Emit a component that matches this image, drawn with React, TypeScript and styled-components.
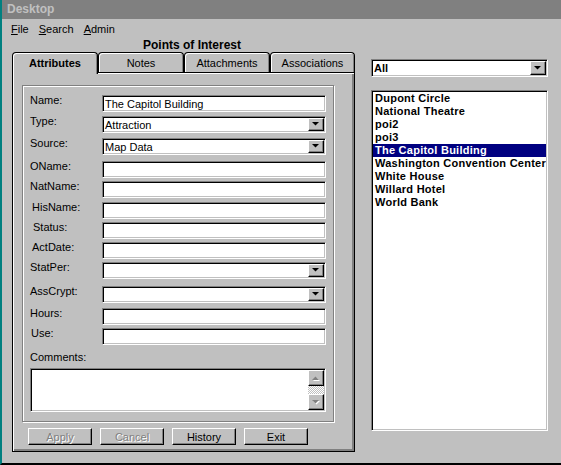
import React from "react";
import styled, { createGlobalStyle } from "styled-components";

const Global = createGlobalStyle`
  html, body { margin: 0; padding: 0; background: #c0c0c0; }
  body { font-family: "Liberation Sans", Arial, sans-serif; font-size: 11px; color: #000; }
  * { box-sizing: border-box; }
`;

const Window = styled.div`
  width: 561px;
  height: 465px;
  background: #c0c0c0;
  border-left: 2px solid #008080;
  border-bottom: 2px solid #000;
  display: flex;
  flex-direction: column;
  overflow: hidden;
`;

const TitleBar = styled.div`
  height: 19px;
  flex: none;
  background: #808080;
  color: #c0c0c0;
  font-weight: bold;
  font-size: 12px;
  line-height: 19px;
  padding-left: 5px;
`;

const MenuBar = styled.div`
  height: 20px;
  flex: none;
  display: flex;
  align-items: center;
  gap: 10px;
  padding-left: 9px;
  font-size: 11px;
`;

const MenuItem = styled.span`
  u { text-decoration: underline; text-underline-offset: 1px; }
`;

const Main = styled.div`
  flex: 1;
  display: flex;
`;

const LeftPane = styled.div`
  width: 358px;
  flex: none;
  display: flex;
  flex-direction: column;
`;

const Heading = styled.div`
  height: 13px;
  line-height: 13px;
  font-weight: bold;
  font-size: 12px;
  padding-left: 141px;
`;

const TabStrip = styled.div`
  display: flex;
  align-items: flex-end;
  height: 20px;
  margin-left: 10px;
  position: relative;
  z-index: 2;
`;

const Tab = styled.div<{ $active?: boolean; $w: number }>`
  width: ${(p) => p.$w}px;
  height: ${(p) => (p.$active ? 22 : 20)}px;
  margin-bottom: ${(p) => (p.$active ? -2 : 0)}px;
  padding-bottom: ${(p) => (p.$active ? 2 : 0)}px;
  background: #c0c0c0;
  border: 1px solid #000;
  border-bottom: none;
  border-radius: 4px 4px 0 0;
  box-shadow: inset 1px 1px 0 #fff, inset -1px 0 0 #808080;
  display: flex;
  align-items: center;
  justify-content: center;
  font-weight: ${(p) => (p.$active ? "bold" : "normal")};
  font-size: 11px;
`;

const Panel = styled.div`
  margin-left: 10px;
  width: 343px;
  height: 380px;
  border: 1px solid #000;
  box-shadow: inset 1px 1px 0 #fff, inset -1px -1px 0 #808080, inset -2px -2px 0 #808080;
  padding: 12px 0 0 9px;
  display: flex;
  flex-direction: column;
`;

const GroupBox = styled.div`
  width: 312px;
  height: 337px;
  border: 1px solid #808080;
  box-shadow: 1px 1px 0 #fff, inset 1px 1px 0 #fff;
  padding: 9px 7px 0 7px;
  display: flex;
  flex-direction: column;
`;

const FormRow = styled.div<{ $gap: number }>`
  display: grid;
  grid-template-columns: 72px 224px;
  margin-top: ${(p) => p.$gap}px;
`;

const Label = styled.span<{ $indent?: number }>`
  line-height: 13px;
  padding-left: ${(p) => p.$indent ?? 0}px;
  margin-top: -1px;
`;

const Field = styled.div<{ $bold?: boolean; $h?: number }>`
  display: flex;
  align-items: stretch;
  height: ${(p) => p.$h ?? 17}px;
  background: #fff;
  border: 1px solid;
  border-color: #808080 #fff #fff #808080;
  box-shadow: inset 1px 1px 0 #000, inset -1px -1px 0 #c0c0c0;
  padding: 1px 1px 1px 0;
  font-weight: ${(p) => (p.$bold ? "bold" : "normal")};
  overflow: hidden;
`;

const FieldText = styled.span`
  flex: 1;
  display: flex;
  align-items: center;
  padding-left: 2px;
  white-space: nowrap;
  overflow: hidden;
`;

const RaisedBox = styled.span`
  flex: none;
  width: 16px;
  display: flex;
  align-items: center;
  justify-content: center;
  background: #c0c0c0;
  border: 1px solid;
  border-color: #fff #000 #000 #fff;
  box-shadow: inset -1px -1px 0 #808080;
`;

const CommentsLabel = styled.div`
  margin-top: 6px;
  line-height: 13px;
  padding-left: 0px;
`;

const CommentsBox = styled.div`
  margin-top: 4px;
  width: 296px;
  height: 44px;
  background: #fff;
  border: 1px solid;
  border-color: #808080 #fff #fff #808080;
  box-shadow: inset 1px 1px 0 #000, inset -1px -1px 0 #c0c0c0;
  padding: 1px 1px 1px 0;
  display: flex;
  justify-content: flex-end;
`;

const ScrollBar = styled.div`
  width: 16px;
  display: flex;
  flex-direction: column;
`;

const ScrollButton = styled(RaisedBox)`
  height: 16px;
`;

const ScrollTrack = styled.div`
  flex: 1;
  background: repeating-conic-gradient(#c0c0c0 0 25%, #fff 0 50%) 0 0 / 2px 2px;
`;

const ButtonRow = styled.div`
  display: flex;
  gap: 8px;
  margin-top: 6px;
  padding-left: 6px;
`;

const Button = styled.button`
  width: 64px;
  height: 17px;
  padding: 0;
  font: 11px "Liberation Sans", Arial, sans-serif;
  background: #c0c0c0;
  color: #000;
  border: 1px solid;
  border-color: #fff #000 #000 #fff;
  box-shadow: inset -1px -1px 0 #808080;
  &:disabled {
    color: #808080;
    text-shadow: 1px 1px 0 #fff;
  }
`;

const RightPane = styled.div`
  flex: 1;
  display: flex;
  flex-direction: column;
  padding: 20px 0 0 11px;
`;

const SelectBox = styled(Field)`
  width: 177px;
`;

const ListBox = styled.div`
  margin-top: 13px;
  width: 177px;
  height: 341px;
  background: #fff;
  border: 1px solid;
  border-color: #808080 #fff #fff #808080;
  box-shadow: inset 1px 1px 0 #000, inset -1px -1px 0 #c0c0c0;
  padding: 1px 1px 1px 1px;
  display: flex;
  flex-direction: column;
  overflow: hidden;
`;

const ListItem = styled.div<{ $selected?: boolean }>`
  height: 13px;
  line-height: 13px;
  padding-left: 2px;
  font-weight: bold;
  font-size: 11px;
  letter-spacing: 0.25px;
  white-space: nowrap;
  overflow: hidden;
  background: ${(p) => (p.$selected ? "#000080" : "transparent")};
  color: ${(p) => (p.$selected ? "#fff" : "#000")};
`;

const Arrow = ({ up, disabled }: { up?: boolean; disabled?: boolean }) => (
  <svg width="8" height="5" viewBox="0 0 8 5" style={{ display: "block" }}>
    {disabled && (
      <polygon
        points={up ? "1,5 4.5,1.5 8,5" : "1,1 8,1 4.5,4.5"}
        fill="#fff"
      />
    )}
    <polygon
      points={up ? "0,4 3.5,0.5 7,4" : "0,0 7,0 3.5,3.5"}
      fill={disabled ? "#808080" : "#000"}
    />
  </svg>
);

type Row = {
  label: string;
  kind: "text" | "combo";
  value?: string;
  gap: number;
  indent?: number;
};

const rows: Row[] = [
  { label: "Name:", kind: "text", value: "The Capitol Building", gap: 0 },
  { label: "Type:", kind: "combo", value: "Attraction", gap: 4 },
  { label: "Source:", kind: "combo", value: "Map Data", gap: 5 },
  { label: "OName:", kind: "text", gap: 6, indent: -1 },
  { label: "NatName:", kind: "text", gap: 3 },
  { label: "HisName:", kind: "text", gap: 4, indent: 2 },
  { label: "Status:", kind: "text", gap: 3, indent: 3 },
  { label: "ActDate:", kind: "text", gap: 3, indent: 2 },
  { label: "StatPer:", kind: "combo", gap: 3, indent: -1 },
  { label: "AssCrypt:", kind: "combo", gap: 7, indent: -1 },
  { label: "Hours:", kind: "text", gap: 5 },
  { label: "Use:", kind: "text", gap: 3, indent: 1 },
];

const pois = [
  "Dupont Circle",
  "National Theatre",
  "poi2",
  "poi3",
  "The Capitol Building",
  "Washington Convention Center",
  "White House",
  "Willard Hotel",
  "World Bank",
];

const tabs = [
  { name: "Attributes", w: 86 },
  { name: "Notes", w: 86 },
  { name: "Attachments", w: 86 },
  { name: "Associations", w: 85 },
];

export default function App() {
  return (
    <>
      <Global />
      <Window>
        <TitleBar>Desktop</TitleBar>
        <MenuBar>
          <MenuItem>
            <u>F</u>ile
          </MenuItem>
          <MenuItem>
            <u>S</u>earch
          </MenuItem>
          <MenuItem>
            <u>A</u>dmin
          </MenuItem>
        </MenuBar>
        <Main>
          <LeftPane>
            <Heading>Points of Interest</Heading>
            <TabStrip>
              {tabs.map((t, i) => (
                <Tab key={t.name} $w={t.w} $active={i === 0}>
                  {t.name}
                </Tab>
              ))}
            </TabStrip>
            <Panel>
              <GroupBox>
                {rows.map((r) => (
                  <FormRow key={r.label} $gap={r.gap}>
                    <Label $indent={r.indent}>{r.label}</Label>
                    <Field>
                      <FieldText>{r.value ?? ""}</FieldText>
                      {r.kind === "combo" && (
                        <RaisedBox>
                          <Arrow />
                        </RaisedBox>
                      )}
                    </Field>
                  </FormRow>
                ))}
                <CommentsLabel>Comments:</CommentsLabel>
                <CommentsBox>
                  <ScrollBar>
                    <ScrollButton>
                      <Arrow up disabled />
                    </ScrollButton>
                    <ScrollTrack />
                    <ScrollButton>
                      <Arrow disabled />
                    </ScrollButton>
                  </ScrollBar>
                </CommentsBox>
              </GroupBox>
              <ButtonRow>
                <Button disabled>Apply</Button>
                <Button disabled>Cancel</Button>
                <Button>History</Button>
                <Button>Exit</Button>
              </ButtonRow>
            </Panel>
          </LeftPane>
          <RightPane>
            <SelectBox $bold $h={18}>
              <FieldText>All</FieldText>
              <RaisedBox>
                <Arrow />
              </RaisedBox>
            </SelectBox>
            <ListBox>
              {pois.map((p) => (
                <ListItem key={p} $selected={p === "The Capitol Building"}>
                  {p}
                </ListItem>
              ))}
            </ListBox>
          </RightPane>
        </Main>
      </Window>
    </>
  );
}
